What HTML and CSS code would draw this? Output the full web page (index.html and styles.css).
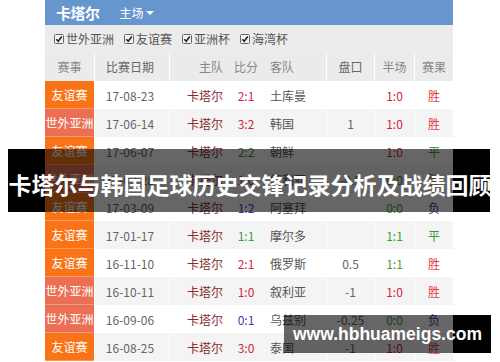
FILE: index.html
```html
<!DOCTYPE html>
<html lang="zh">
<head>
<meta charset="utf-8">
<title>卡塔尔与韩国足球历史交锋记录分析及战绩回顾</title>
<link rel="stylesheet" href="styles.css">
</head>
<body>
<div class="page">
  <div class="board">
    <div class="topbar">
      <span class="team-title">卡塔尔</span>
      <span class="venue">主场<i class="caret"></i></span>
    </div>
    <div class="filters">
      <label class="chk"><svg class="box" viewBox="0 0 10 10"><rect x="0.5" y="0.5" width="9" height="9" rx="1" fill="#f4f4f4" stroke="#666"/><path d="M2.3 5.2 L4.2 7.2 L7.8 2.6" fill="none" stroke="#222" stroke-width="1.6"/></svg>世外亚洲</label>
      <label class="chk"><svg class="box" viewBox="0 0 10 10"><rect x="0.5" y="0.5" width="9" height="9" rx="1" fill="#f4f4f4" stroke="#666"/><path d="M2.3 5.2 L4.2 7.2 L7.8 2.6" fill="none" stroke="#222" stroke-width="1.6"/></svg>友谊赛</label>
      <label class="chk"><svg class="box" viewBox="0 0 10 10"><rect x="0.5" y="0.5" width="9" height="9" rx="1" fill="#f4f4f4" stroke="#666"/><path d="M2.3 5.2 L4.2 7.2 L7.8 2.6" fill="none" stroke="#222" stroke-width="1.6"/></svg>亚洲杯</label>
      <label class="chk"><svg class="box" viewBox="0 0 10 10"><rect x="0.5" y="0.5" width="9" height="9" rx="1" fill="#f4f4f4" stroke="#666"/><path d="M2.3 5.2 L4.2 7.2 L7.8 2.6" fill="none" stroke="#222" stroke-width="1.6"/></svg>海湾杯</label>
    </div>
    <div class="row head">
      <div class="c c-type">赛事</div>
      <div class="c c-date">比赛日期</div>
      <div class="c c-teams"><span class="home">主队</span><span class="score">比分</span><span class="away">客队</span></div>
      <div class="c c-hc">盘口</div>
      <div class="c c-half">半场</div>
      <div class="c c-res">赛果</div>
    </div>

    <div class="row">
      <div class="c c-type fr">友谊赛</div>
      <div class="c c-date">17-08-23</div>
      <div class="c c-teams"><span class="home">卡塔尔</span><span class="score win">2:1</span><span class="away">土库曼</span></div>
      <div class="c c-hc"></div>
      <div class="c c-half win">1:0</div>
      <div class="c c-res win">胜</div>
    </div>
    <div class="row alt">
      <div class="c c-type wc">世外亚洲</div>
      <div class="c c-date">17-06-14</div>
      <div class="c c-teams"><span class="home">卡塔尔</span><span class="score win">3:2</span><span class="away">韩国</span></div>
      <div class="c c-hc">1</div>
      <div class="c c-half win">1:0</div>
      <div class="c c-res win">胜</div>
    </div>
    <div class="row">
      <div class="c c-type fr">友谊赛</div>
      <div class="c c-date">17-06-07</div>
      <div class="c c-teams"><span class="home">卡塔尔</span><span class="score draw">2:2</span><span class="away">朝鲜</span></div>
      <div class="c c-hc"></div>
      <div class="c c-half win">1:0</div>
      <div class="c c-res draw">平</div>
    </div>
    <div class="row alt">
      <div class="c c-type wc">世外亚洲</div>
      <div class="c c-date">17-03-28</div>
      <div class="c c-teams"><span class="home">卡塔尔</span><span class="score win">1:0</span><span class="away">叙利亚</span></div>
      <div class="c c-hc">-0.5</div>
      <div class="c c-half draw">0:0</div>
      <div class="c c-res win">胜</div>
    </div>
    <div class="row">
      <div class="c c-type fr">友谊赛</div>
      <div class="c c-date">17-03-09</div>
      <div class="c c-teams"><span class="home">卡塔尔</span><span class="score loss">1:2</span><span class="away">阿塞拜</span></div>
      <div class="c c-hc"></div>
      <div class="c c-half draw">0:0</div>
      <div class="c c-res loss">负</div>
    </div>
    <div class="row alt">
      <div class="c c-type fr">友谊赛</div>
      <div class="c c-date">17-01-17</div>
      <div class="c c-teams"><span class="home">卡塔尔</span><span class="score draw">1:1</span><span class="away">摩尔多</span></div>
      <div class="c c-hc"></div>
      <div class="c c-half draw">1:1</div>
      <div class="c c-res draw">平</div>
    </div>
    <div class="row">
      <div class="c c-type fr">友谊赛</div>
      <div class="c c-date">16-11-10</div>
      <div class="c c-teams"><span class="home">卡塔尔</span><span class="score win">2:1</span><span class="away">俄罗斯</span></div>
      <div class="c c-hc">0.5</div>
      <div class="c c-half draw">1:1</div>
      <div class="c c-res win">胜</div>
    </div>
    <div class="row alt">
      <div class="c c-type wc">世外亚洲</div>
      <div class="c c-date">16-10-11</div>
      <div class="c c-teams"><span class="home">卡塔尔</span><span class="score win">1:0</span><span class="away">叙利亚</span></div>
      <div class="c c-hc">-1</div>
      <div class="c c-half win">1:0</div>
      <div class="c c-res win">胜</div>
    </div>
    <div class="row">
      <div class="c c-type wc">世外亚洲</div>
      <div class="c c-date">16-09-06</div>
      <div class="c c-teams"><span class="home">卡塔尔</span><span class="score loss">0:1</span><span class="away">乌兹别</span></div>
      <div class="c c-hc">-0.25</div>
      <div class="c c-half draw">0:0</div>
      <div class="c c-res loss">负</div>
    </div>
    <div class="row alt">
      <div class="c c-type fr">友谊赛</div>
      <div class="c c-date">16-08-25</div>
      <div class="c c-teams"><span class="home">卡塔尔</span><span class="score win">3:0</span><span class="away">泰国</span></div>
      <div class="c c-hc">-1</div>
      <div class="c c-half win">1:0</div>
      <div class="c c-res win">胜</div>
    </div>
  </div>

  <div class="title-band">
    <div class="band-side"></div>
    <div class="band-mid"></div>
    <div class="band-side"></div>
    <h1 class="title-text">卡塔尔与韩国足球历史交锋记录分析及战绩回顾</h1>
  </div>

  <div class="url-band">
    <div class="url-mid"></div>
    <div class="url-side"></div>
    <span class="url-text">www.hbhuameigs.com</span>
  </div>
</div>
</body>
</html>
```

FILE: styles.css
```css
* { box-sizing: border-box; }
html, body { margin: 0; padding: 0; background: #fff; }
body {
  font-family: "Noto Sans CJK SC", "Noto Sans", sans-serif;
  font-size: 12px;
  color: #666;
}
.page {
  position: relative;
  width: 500px;
  height: 362px;
  overflow: hidden;
}
.board {
  margin-left: 45px;
  width: 408px;
}
.topbar {
  height: 25px;
  background: #6796cf;
  display: flex;
  align-items: center;
  padding-left: 11px;
  color: #fff;
}
.team-title {
  font-size: 15px;
  font-weight: bold;
  letter-spacing: -0.5px;
}
.venue {
  margin-left: 20px;
  font-size: 12px;
  display: flex;
  align-items: center;
}
.caret {
  display: inline-block;
  width: 0;
  height: 0;
  margin-left: 2px;
  border-left: 4px solid transparent;
  border-right: 4px solid transparent;
  border-top: 4px solid #fff;
}
.filters {
  height: 27px;
  background: #ececec;
  display: flex;
  align-items: center;
  padding-left: 9px;
  gap: 10px;
  color: #555;
}
.chk {
  display: flex;
  align-items: center;
}
.box {
  width: 10px;
  height: 10px;
  margin-right: 2px;
}
.row {
  display: grid;
  grid-template-columns: 49px 75px 157px 48px 40px 39px;
  height: 28px;
  background: #fff;
}
.row.head {
  height: 29px;
  background: #ebebeb;
  color: #888;
}
.row.alt { background: #f4f4f4; }
.c {
  display: flex;
  align-items: center;
  justify-content: center;
  border-left: 1px solid #fff;
  white-space: nowrap;
}
.c-type {
  border-left: none;
  color: #fff;
}
.row.head .c-type { color: #888; }
.c-type.fr { background: #fa7417; border-bottom: 1px solid #fb9a55; }
.c-type.wc { background: #ea6f54; border-bottom: 1px solid #f09a86; }
.c-date { color: #666; padding-right: 4px; }
.c-teams {
  display: grid;
  grid-template-columns: 55px 42px 60px;
  justify-content: stretch;
}
.home { text-align: right; padding-right: 2px; color: #8a2a2a; }
.row.head .home, .row.head .score, .row.head .away { color: #888; }
.score { text-align: center; }
.away { padding-left: 3px; color: #555; }
.win { color: #d6263f; }
.draw { color: #3e9a3e; }
.loss { color: #3a3ab8; }
.c-res.loss { color: #3a3a9a; }
.c-res.win { color: #e03a40; }
.c-hc { color: #666; }

.title-band {
  position: absolute;
  left: 8px;
  top: 149px;
  width: 484px;
  height: 63px;
  display: flex;
}
.band-side { width: 37px; background: #000; }
.band-mid { width: 408px; background: rgba(0, 0, 0, 0.6); }
.title-text {
  position: absolute;
  left: 0;
  top: 0;
  width: 100%;
  height: 100%;
  margin: 0;
  display: flex;
  align-items: center;
  justify-content: center;
  padding-top: 6px;
  color: #fff;
  font-family: "Noto Sans CJK SC", sans-serif;
  font-size: 23px;
  font-weight: bold;
  letter-spacing: 0;
  white-space: nowrap;
}
.url-band {
  position: absolute;
  left: 284px;
  top: 315px;
  width: 207px;
  height: 38px;
  display: flex;
}
.url-mid { width: 169px; background: rgba(0, 0, 0, 0.6); }
.url-side { width: 38px; background: #000; }
.url-text {
  position: absolute;
  left: 9px;
  top: 0;
  height: 100%;
  display: flex;
  align-items: center;
  color: #fff;
  font-family: "Liberation Sans", Arial, sans-serif;
  font-size: 17.5px;
  font-weight: bold;
  white-space: nowrap;
}
```
